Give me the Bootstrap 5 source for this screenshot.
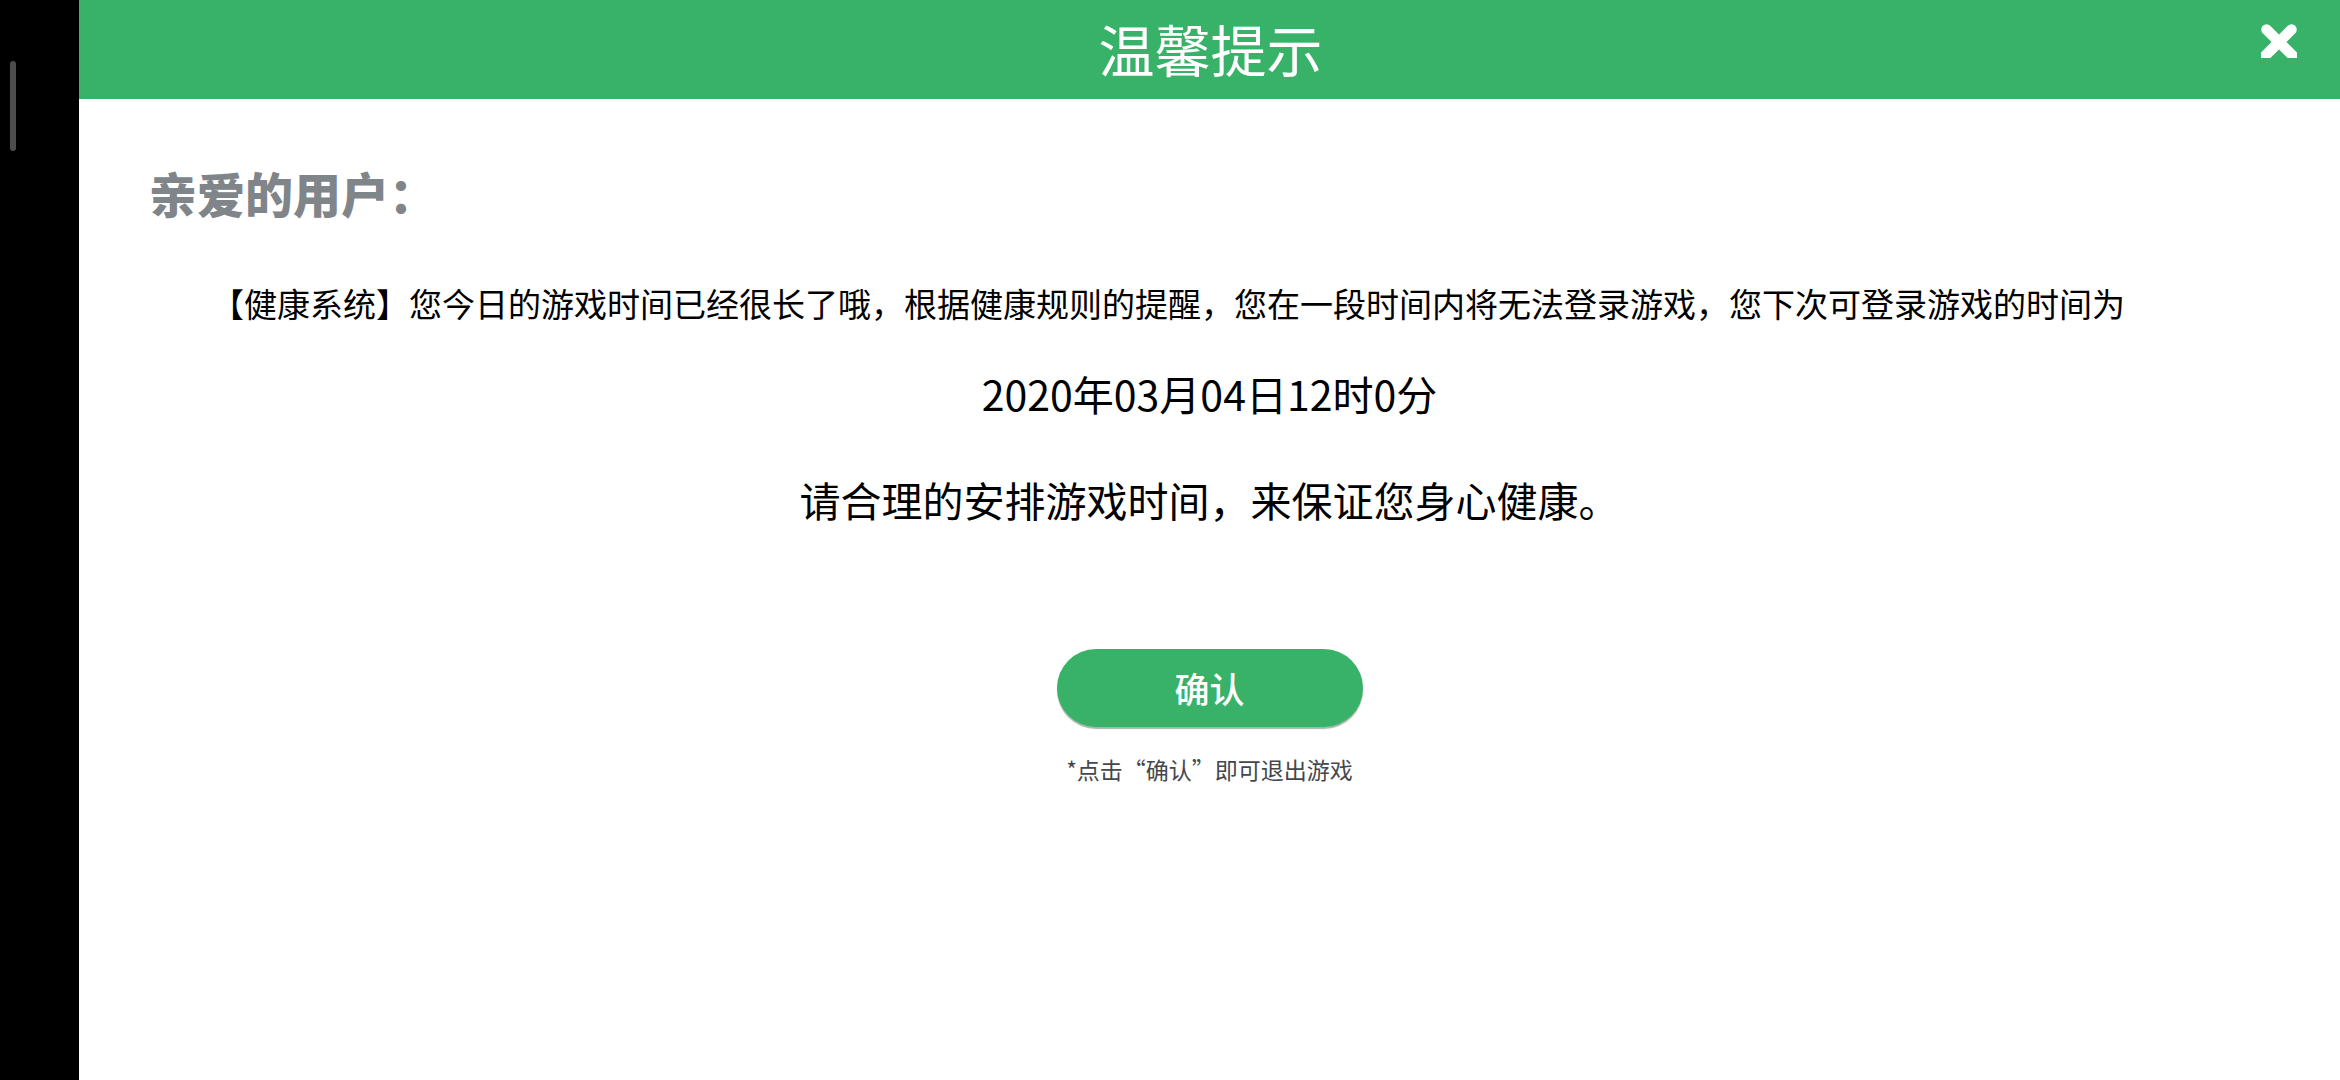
<!DOCTYPE html>
<html lang="zh-CN">
<head>
<meta charset="utf-8">
<meta name="viewport" content="width=device-width, initial-scale=1">
<title>温馨提示</title>
<link href="https://cdn.jsdelivr.net/npm/bootstrap@5.3.0/dist/css/bootstrap.min.css" rel="stylesheet">
<style>
body { font-family: "Noto Sans CJK SC", sans-serif; color: #000; background: #fff; }
.side-strip { width: 79px; background: #000; padding: 61px 0 0 10px; }
.side-handle { width: 6px; height: 90px; background: #4d4d4d; }
.notice-head { height: 99px; background: #38b268; padding: 0 43px 0 45px; }
.notice-title { font-size: 56px; line-height: 96px; font-weight: 400; }
.head-side { width: 36px; }
.close-btn { margin-top: 24px; line-height: 0; }
.notice-body { padding: 58px 70px; }
.greeting { font-size: 48px; line-height: 70px; font-weight: 900; color: #80858a; margin-bottom: 52px; }
.notice-text { font-size: 33px; line-height: 48px; padding-left: 62px; margin-bottom: 36px; }
.notice-main { font-size: 41px; line-height: 60px; margin-bottom: 46px; }
.confirm-btn { width: 306px; height: 78px; background: #38b268; color: #fff; font-size: 35px; line-height: 52px; font-weight: 500; margin-top: 74px; box-shadow: 0 2px 1px #a9b5a9; }
.confirm-btn:hover { background: #2f9f5b; color: #fff; }
.exit-note { font-size: 23px; line-height: 34px; color: #45474c; margin-top: 25px; }
</style>
<script src="https://cdn.jsdelivr.net/npm/bootstrap@5.3.0/dist/js/bootstrap.bundle.min.js"></script>
</head>
<body>
<div class="d-flex min-vh-100">
  <aside class="side-strip flex-shrink-0"><div class="side-handle rounded-pill"></div></aside>
  <div class="flex-grow-1">
    <header class="notice-head d-flex justify-content-between align-items-start text-white">
      <div class="head-side"></div>
      <h1 class="notice-title m-0">温馨提示</h1>
      <button type="button" class="close-btn head-side border-0 bg-transparent p-0" aria-label="关闭">
        <svg width="36" height="34" viewBox="0 0 36 34"><path d="M5.500 5.500L32 32M30.500 5.500L4 32" stroke="#fff" stroke-width="10.500" stroke-linecap="round" fill="none"/></svg>
      </button>
    </header>
    <main class="notice-body">
      <h2 class="greeting mt-0">亲爱的用户：</h2>
      <p class="notice-text">【健康系统】您今日的游戏时间已经很长了哦，根据健康规则的提醒，您在一段时间内将无法登录游戏，您下次可登录游戏的时间为</p>
      <p class="notice-main text-center">2020年03月04日12时0分</p>
      <p class="notice-main text-center">请合理的安排游戏时间，来保证您身心健康。</p>
      <div class="d-flex flex-column align-items-center">
        <button type="button" class="confirm-btn btn border-0 rounded-pill">确认</button>
        <p class="exit-note mb-0">*点击“确认”即可退出游戏</p>
      </div>
    </main>
  </div>
</div>
</body>
</html>
